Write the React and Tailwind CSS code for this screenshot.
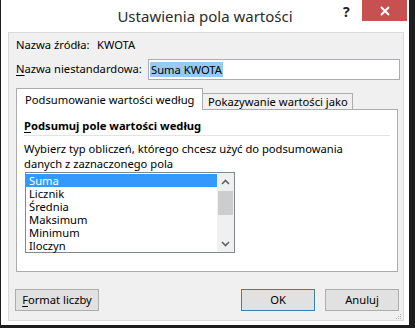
import React from "react"

const items = ["Suma", "Licznik", "Średnia", "Maksimum", "Minimum", "Iloczyn"]

const Chevron = ({ up }) => (
  <svg width="9" height="6" viewBox="0 0 9 6">
    <path
      d={up ? "M1 5 L4.5 1.5 L8 5" : "M1 1 L4.5 4.5 L8 1"}
      fill="none"
      stroke="#606060"
      strokeWidth="1.6"
    />
  </svg>
)

export default function App() {
  return (
    <div
      className="w-[415px] h-[328px] bg-[#1e1e1e] overflow-hidden text-[11.2px] text-black whitespace-nowrap"
      style={{ fontFamily: '"Noto Sans", "Open Sans", sans-serif' }}
    >
      <div className="ml-px w-[408px] h-[325px] bg-white flex flex-col">
        {/* Title bar */}
        <div className="h-[32px] flex items-start shrink-0">
          <div className="flex-1 pl-[66px] pt-[5px] text-center text-[15px] text-[#2b2b2b] leading-[22px]">
            Ustawienia pola wartości
          </div>
          <div className="w-[19px] pt-[3px] font-bold text-[14px] text-[#222] leading-[18px]">?</div>
          <div className="w-[45px] h-[21px] bg-[#c75050] flex items-center justify-center">
            <svg width="10" height="10" viewBox="0 0 10 10">
              <path d="M1 1 L9 9 M9 1 L1 9" stroke="white" strokeWidth="2" />
            </svg>
          </div>
          <div className="w-[2px]" />
        </div>

        {/* Content */}
        <div className="ml-[7px] mr-[5px] mb-[5px] flex-1 border border-[#dadada] bg-[#f0f0f0] flex flex-col">
          <div className="mt-[4px] pl-[7px] h-[16px] flex items-center leading-[16px]">
            <span className="w-[81px]">Nazwa źródła:</span>
            <span>KWOTA</span>
          </div>

          <div className="mt-[6px] pl-[7px] pr-[3px] h-[21px] flex items-center">
            <span className="w-[132px]">
              <u className="underline-offset-2">N</u>azwa niestandardowa:
            </span>
            <div className="w-[252px] h-[21px] bg-white border border-[#abadb3] flex items-center pl-[1px]">
              <span className="bg-[#99c9ef] px-[1px] leading-[15px]">Suma KWOTA</span>
            </div>
          </div>

          {/* Tabs */}
          <div className="mt-[8px] ml-[7px] flex items-end h-[21px]">
            <div className="relative z-10 w-[187px] h-[22px] -mb-px bg-white border border-b-0 border-[#acacac] pl-[8px] pt-[3px] leading-[16px]">
              Podsumowanie wartości według
            </div>
            <div className="w-[150px] h-[16px] bg-[#f0f0f0] border border-l-0 border-b-0 border-[#acacac] pl-[5px] leading-[15px]">
              Pokazywanie wartości jako
            </div>
          </div>

          <div className="ml-[7px] w-[382px] h-[163px] bg-white border border-[#acacac] px-[7px] flex flex-col">
            <div className="mt-[8px] font-bold leading-[16px]">
              <u className="underline-offset-2">P</u>odsumuj pole wartości według
            </div>
            <div className="mt-[1px] h-px bg-[#e3e3e3]" />
            <div className="mt-[5px] leading-[15px]">
              Wybierz typ obliczeń, którego chcesz użyć do podsumowania
              <br />
              danych z zaznaczonego pola
            </div>
            <div className="mt-[1px] ml-[1px] w-[210px] h-[81px] border border-[#828790] bg-white flex">
              <div className="flex-1 pt-[1px]">
                {items.map((it, i) => (
                  <div
                    key={it}
                    className={`h-[13px] leading-[13px] pl-[3px] ${i === 0 ? "bg-[#3399ff] text-white" : ""}`}
                  >
                    {it}
                  </div>
                ))}
              </div>
              <div className="w-[17px] bg-[#f0f0f0] flex flex-col items-center">
                <div className="h-[17px] flex items-center justify-center">
                  <Chevron up />
                </div>
                <div className="w-[15px] h-[24px] bg-[#cdcdcd] mt-[1px]" />
                <div className="flex-1" />
                <div className="h-[17px] flex items-center justify-center">
                  <Chevron />
                </div>
              </div>
            </div>
          </div>

          {/* Buttons */}
          <div className="mt-[17px] ml-[6px] mr-[4px] flex items-center">
            <div className="w-[84px] h-[22px] bg-[#e1e1e1] border border-[#adadad] flex items-center justify-center">
              <span>
                <u className="underline-offset-2">F</u>ormat liczby
              </span>
            </div>
            <div className="flex-1" />
            <div className="w-[74px] h-[22px] bg-[#e1e1e1] border border-[#3c7fb1] flex items-center justify-center">
              OK
            </div>
            <div className="ml-[10px] w-[74px] h-[22px] bg-[#e1e1e1] border border-[#adadad] flex items-center justify-center">
              Anuluj
            </div>
          </div>

          <div className="mt-[2px] flex justify-end pr-[1px]">
            <svg width="7" height="7" viewBox="0 0 7 7">
              <rect x="5" y="1" width="1" height="1" fill="#b0b0b0" />
              <rect x="3" y="3" width="1" height="1" fill="#b0b0b0" />
              <rect x="5" y="3" width="1" height="1" fill="#b0b0b0" />
              <rect x="1" y="5" width="1" height="1" fill="#b0b0b0" />
              <rect x="3" y="5" width="1" height="1" fill="#b0b0b0" />
              <rect x="5" y="5" width="1" height="1" fill="#b0b0b0" />
            </svg>
          </div>
        </div>
      </div>
    </div>
  )
}
